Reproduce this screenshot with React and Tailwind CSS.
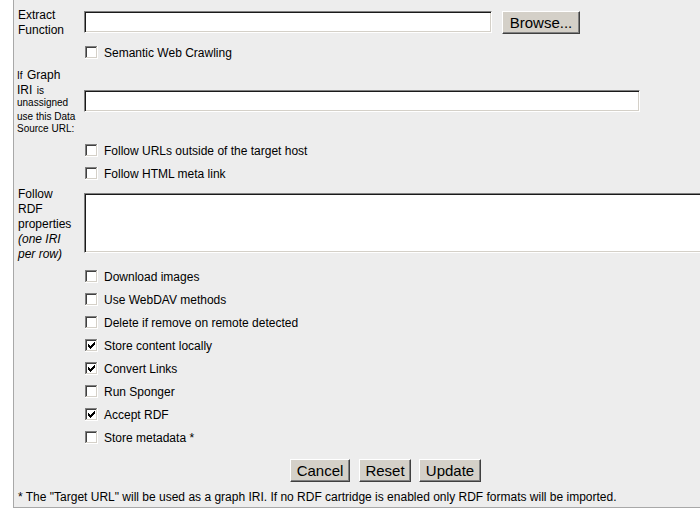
import React from "react";

// classic win98-style checkbox, drawn pixel by pixel
const CheckBox = ({ checked }) => (
  <svg width="13" height="13" viewBox="0 0 13 13" shapeRendering="crispEdges" className="shrink-0">
    <rect x="0" y="0" width="13" height="13" fill="#fff" />
    <rect x="0" y="0" width="12" height="1" fill="#808080" />
    <rect x="0" y="0" width="1" height="12" fill="#808080" />
    <rect x="1" y="1" width="10" height="1" fill="#404040" />
    <rect x="1" y="1" width="1" height="10" fill="#404040" />
    <rect x="1" y="11" width="11" height="1" fill="#d4d0c8" />
    <rect x="11" y="1" width="1" height="11" fill="#d4d0c8" />
    {checked && (
      <g fill="#000">
        <rect x="9" y="3" width="1" height="3" />
        <rect x="8" y="4" width="1" height="3" />
        <rect x="7" y="5" width="1" height="3" />
        <rect x="6" y="6" width="1" height="3" />
        <rect x="5" y="7" width="1" height="3" />
        <rect x="4" y="6" width="1" height="3" />
        <rect x="3" y="5" width="1" height="3" />
      </g>
    )}
  </svg>
);

const CheckRow = ({ label, checked }) => (
  <div className="flex h-[23px] items-center pl-[71px]">
    <CheckBox checked={checked} />
    <span className="ml-[6px] text-[12px] leading-[14px]">{label}</span>
  </div>
);

const inputCls =
  "block h-[22px] bg-white border border-t-[#808080] border-l-[#808080] border-b-white border-r-white shadow-[inset_1px_1px_0_#1a1a1a,inset_-1px_-1px_0_#d4d0c8]";

const Button = ({ children, w }) => (
  <button
    className={
      "h-[23px] bg-[#d4d0c8] border border-t-white border-l-white border-r-[#404040] border-b-[#404040] shadow-[inset_-1px_-1px_0_#808080] text-[15px] leading-[15px] text-black " +
      w
    }
  >
    {children}
  </button>
);

const App = () => {
  return (
    <div className="min-h-[511px] bg-white pl-[13px] font-['Liberation_Sans',Arial,sans-serif] text-black">
      <div className="h-[508px] overflow-hidden border-l border-b border-[#a8a8a8] bg-[#ededed]">
        {/* Extract function */}
        <div className="pt-[3px]">
          <div className="flex h-[38px] items-center">
            <div className="w-[70px] shrink-0 pl-[4px] pt-[2px] text-[12px] leading-[15px]">
              Extract
              <br />
              Function
            </div>
            <div className="flex items-center">
              <div className={inputCls + " w-[408px]"} />
              <Button w="ml-[10px] w-[78px]">Browse...</Button>
            </div>
          </div>
        </div>

        <CheckRow label="Semantic Web Crawling" />

        {/* Graph IRI */}
        <div className="flex h-[73px] items-center">
          <div className="w-[70px] shrink-0 pl-[3px]">
            <div className="h-[15px] leading-[15px] whitespace-nowrap">
              <span className="text-[10px]">If</span> <span className="text-[12px]">Graph</span>
            </div>
            <div className="h-[15px] leading-[15px] whitespace-nowrap">
              <span className="text-[12px]">IRI</span> <span className="text-[10px]">is</span>
            </div>
            <div className="h-[14px] text-[10px] leading-[14px] whitespace-nowrap">unassigned</div>
            <div className="h-[13px] text-[10px] leading-[13px] whitespace-nowrap">use this Data</div>
            <div className="h-[12px] text-[10px] leading-[12px] whitespace-nowrap">Source URL:</div>
          </div>
          <div className={inputCls + " w-[556px]"} />
        </div>

        <div className="mt-[2px]">
          <CheckRow label="Follow URLs outside of the target host" />
          <CheckRow label="Follow HTML meta link" />
        </div>

        {/* RDF properties */}
        <div className="flex h-[77px] items-start">
          <div className="w-[70px] shrink-0 pl-[4px] pt-[2px] text-[12px] leading-[15px]">
            Follow
            <br />
            RDF
            <br />
            properties
            <br />
            <i>(one IRI</i>
            <br />
            <i>per row)</i>
          </div>
          <div className={inputCls + " mt-[8px] h-[60px] w-[640px] shrink-0"} />
        </div>

        <div className="mt-[3px]">
          <CheckRow label="Download images" />
          <CheckRow label="Use WebDAV methods" />
          <CheckRow label="Delete if remove on remote detected" />
          <CheckRow label="Store content locally" checked />
          <CheckRow label="Convert Links" checked />
          <CheckRow label="Run Sponger" />
          <CheckRow label="Accept RDF" checked />
          <CheckRow label="Store metadata *" />
        </div>

        <div className="mt-[10px] flex pl-[276px]">
          <Button w="w-[60px] mr-[9px]">Cancel</Button>
          <Button w="w-[52px] mr-[8px]">Reset</Button>
          <Button w="w-[62px]">Update</Button>
        </div>

        <div className="mt-[8px] pl-[4px] text-[12px] leading-[14px] whitespace-nowrap">
          * The "Target URL" will be used as a graph IRI. If no RDF cartridge is enabled only RDF formats will be imported.
        </div>
      </div>
    </div>
  );
};

export default App;
